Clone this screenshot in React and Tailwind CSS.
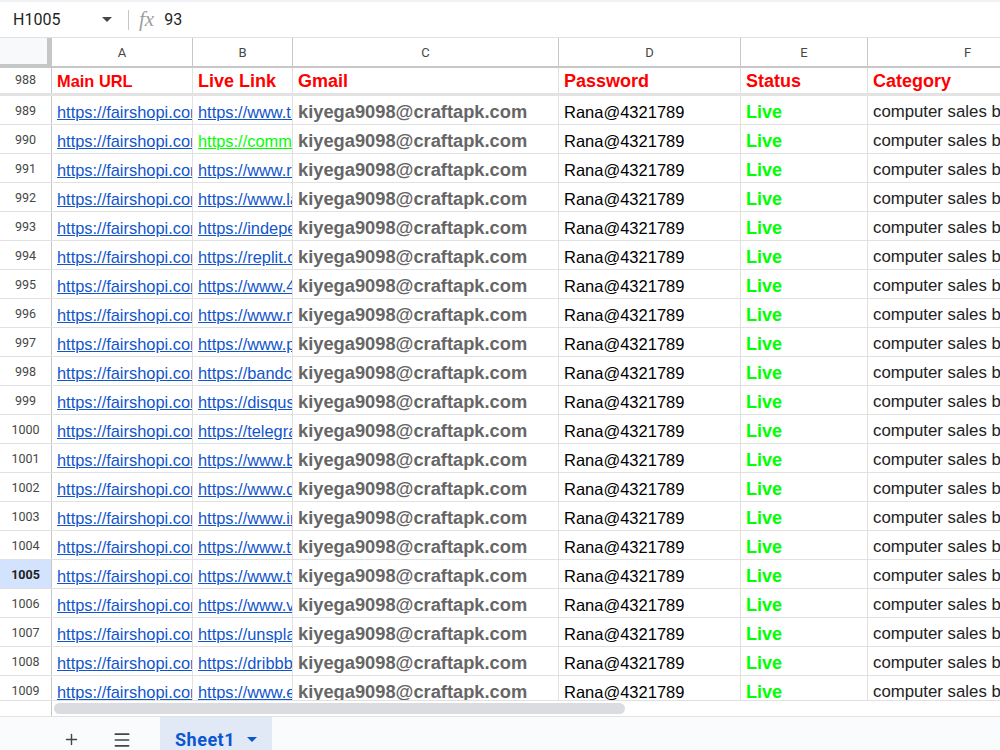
import { Plus, Menu } from 'lucide-react';

// column widths (px) : row-number, A..F
const cols = [
  { key: 'A', w: 'w-[141px]' },
  { key: 'B', w: 'w-[100px]' },
  { key: 'C', w: 'w-[266px]' },
  { key: 'D', w: 'w-[182px]' },
  { key: 'E', w: 'w-[127px]' },
  { key: 'F', w: 'w-[200px]' },
];

const liveLinks = [
  'https://www.tumblr.com/fairshopi',
  'https://community.hubspot.com',
  'https://www.reddit.com/user/fairshopi',
  'https://www.last.fm/user/fairshopi',
  'https://independent.academia.edu',
  'https://replit.com/@fairshopi',
  'https://www.4shared.com/u/fairshopi',
  'https://www.mixcloud.com/fairshopi',
  'https://www.pinterest.com/fairshopi',
  'https://bandcamp.com/fairshopi',
  'https://disqus.com/by/fairshopi',
  'https://telegra.ph/fairshopi',
  'https://www.behance.net/fairshopi',
  'https://www.deviantart.com/fairshopi',
  'https://www.instapaper.com/p/fairshopi',
  'https://www.tripadvisor.com/Profile',
  'https://www.twitch.tv/fairshopi',
  'https://www.vimeo.com/fairshopi',
  'https://unsplash.com/@fairshopi',
  'https://dribbble.com/fairshopi',
  'https://www.etsy.com/people/fairshopi',
];

const cell =
  'shrink-0 flex items-end overflow-hidden whitespace-nowrap border-r border-[#e1e1e1] pl-[5px] leading-[20px]';

const DataRow = ({ n, link }) => {
  const active = n === 1005;
  return (
    <div className="flex h-[29px] border-b border-[#e1e1e1]">
      <div
        className={`shrink-0 w-[52px] flex items-center justify-center pt-[2px] border-r border-[#c7c7c7] text-[12.5px] ${
          active ? 'bg-[#d3e3fd] font-bold text-[#1f1f1f]' : 'text-[#444746]'
        }`}
        style={{ fontFamily: 'Roboto, sans-serif' }}
      >
        {n}
      </div>
      <div className={`${cell} w-[141px] pb-[2px] text-[16.4px] text-[#1155cc] underline`}>
        https://fairshopi.com/
      </div>
      <div
        className={`${cell} w-[100px] pb-[2px] text-[16.4px] underline ${
          n === 990 ? 'text-[#00ff00]' : 'text-[#1155cc]'
        }`}
      >
        {link}
      </div>
      <div className={`${cell} w-[266px] pb-[2px] text-[18.3px] font-bold text-[#666666]`}>
        kiyega9098@craftapk.com
      </div>
      <div className={`${cell} w-[182px] pb-[2px] text-[16.5px] text-black`}>Rana@4321789</div>
      <div className={`${cell} w-[127px] pb-[2px] text-[18px] font-bold text-[#00ff00]`}>Live</div>
      <div className={`${cell} w-[200px] pb-[2px] text-[16.8px] text-[#222]`}>
        computer sales business
      </div>
    </div>
  );
};

export default function App() {
  const nums = Array.from({ length: 21 }, (_, i) => 989 + i);

  return (
    <div
      className="w-[1000px] h-[750px] flex flex-col bg-white overflow-hidden"
      style={{ fontFamily: '"Liberation Sans", Arial, sans-serif' }}
    >
      {/* Formula bar */}
      <div
        className="h-[38px] shrink-0 flex items-center border-t-[2px] border-t-[#f0f2f5] border-b border-[#e1e1e1] text-[#1f1f1f]"
        style={{ fontFamily: 'Roboto, sans-serif' }}
      >
        <span className="pl-[13px] w-[90px] text-[16px]">H1005</span>
        <svg width="10" height="5" viewBox="0 0 10 5" className="ml-[12px]">
          <path d="M0 0h10L5 5z" fill="#444746" />
        </svg>
        <div className="ml-[16px] w-px h-[20px] bg-[#c7c7c7]" />
        <span
          className="ml-[10px] text-[21px] italic text-[#a0a0a0] leading-none"
          style={{ fontFamily: '"Liberation Serif", serif' }}
        >
          fx
        </span>
        <span className="ml-[10px] text-[16px]">93</span>
      </div>

      {/* Grid */}
      <div className="flex-1 overflow-hidden">
        {/* Column letters */}
        <div className="flex h-[30px]" style={{ fontFamily: 'Roboto, sans-serif' }}>
          <div className="shrink-0 w-[52px] bg-[#f8f9fa] border-r-[5px] border-b-[4px] border-[#c4c7c5]" />
          {cols.map((c) => (
            <div
              key={c.key}
              className={`shrink-0 ${c.w} flex items-center justify-center pt-[2px] border-r border-[#c7c7c7] border-b-[2px] border-b-[#c7c7c7] text-[13px] text-[#444746]`}
            >
              {c.key}
            </div>
          ))}
        </div>

        {/* Header row 988 */}
        <div className="flex h-[28px] border-b-[3px] border-[#e3e3e3]">
          <div
            className="shrink-0 w-[52px] flex items-center justify-center border-r border-[#c7c7c7] text-[12.5px] text-[#444746]"
            style={{ fontFamily: 'Roboto, sans-serif' }}
          >
            988
          </div>
          <div className={`${cell} w-[141px] pb-[2px] text-[16.4px] font-bold text-[#ff0000]`}>Main URL</div>
          <div className={`${cell} w-[100px] pb-[2px] text-[18px] font-bold text-[#ff0000]`}>Live Link</div>
          <div className={`${cell} w-[266px] pb-[2px] text-[18px] font-bold text-[#ff0000]`}>Gmail</div>
          <div className={`${cell} w-[182px] pb-[2px] text-[18px] font-bold text-[#ff0000]`}>Password</div>
          <div className={`${cell} w-[127px] pb-[2px] text-[18px] font-bold text-[#ff0000]`}>Status</div>
          <div className={`${cell} w-[200px] pb-[2px] text-[18px] font-bold text-[#ff0000]`}>Category</div>
        </div>

        {nums.map((n, i) => (
          <DataRow key={n} n={n} link={liveLinks[i]} />
        ))}
      </div>

      {/* Horizontal scrollbar strip */}
      <div className="h-[16px] shrink-0 flex border-t border-[#e1e1e1]">
        <div className="w-[52px] shrink-0 border-r border-[#c7c7c7]" />
        <div className="flex-1 pt-[2px] pl-[2px]">
          <div className="w-[571px] h-[11px] rounded-full bg-[#dadce0]" />
        </div>
      </div>

      {/* Sheet tabs */}
      <div
        className="h-[34px] shrink-0 flex items-stretch bg-[#f9fbfd] border-t border-[#e1e3e1]"
        style={{ fontFamily: 'Roboto, sans-serif' }}
      >
        <div className="w-[142px] shrink-0 flex items-center pt-[12px] pl-[63px] gap-[32px] text-[#444746]">
          <Plus size={17} strokeWidth={2} />
          <Menu size={20} strokeWidth={2} />
        </div>
        <div className="ml-[18px] w-[112px] flex items-center pt-[12px] bg-[#e1e9f7] pl-[15px] gap-[12px] text-[#0b57d0]">
          <span className="text-[18px] font-bold tracking-[0.5px] leading-none">Sheet1</span>
          <svg width="10" height="5" viewBox="0 0 10 5">
            <path d="M0 0h10L5 5z" fill="#0b57d0" />
          </svg>
        </div>
      </div>
    </div>
  );
}
